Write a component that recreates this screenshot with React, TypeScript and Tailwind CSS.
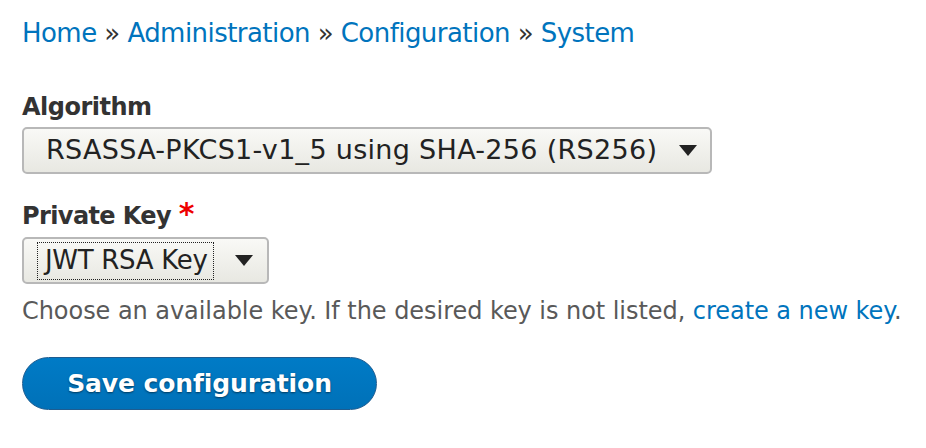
import React from "react";

const FONT = "font-['DejaVu_Sans',sans-serif]";

function Arrow() {
  return (
    <svg width="18" height="11" viewBox="0 0 18 11" className="shrink-0">
      <path d="M0 0 H18 L9 11 Z" fill="#222" />
    </svg>
  );
}

export default function App() {
  return (
    <div className={`${FONT} w-[926px] h-[448px] bg-white pl-[22px] pt-[18px] text-[#333]`}>
      {/* Breadcrumb */}
      <nav className="text-[26px] leading-[30px] text-[#0074bd] tracking-[-0.55px]">
        <a>Home</a> <span className="text-[#333]">»</span> <a>Administration</a>{" "}
        <span className="text-[#333]">»</span> <a>Configuration</a>{" "}
        <span className="text-[#333]">»</span> <a>System</a>
      </nav>

      {/* Algorithm */}
      <div className="mt-[44px]">
        <label className="block text-[24px] leading-[30px] font-bold tracking-[-0.5px]">Algorithm</label>
        <div className="mt-[5px] w-[690px] h-[47px] flex items-center justify-between pl-[22px] pr-[13px] rounded-[5px] border-2 border-[#b8b8b8] bg-gradient-to-b from-[#f9f9f6] to-[#e8e8e2] text-[27px] text-[#222] tracking-[0.3px]">
          <span>RSASSA-PKCS1-v1_5 using SHA-256 (RS256)</span>
          <Arrow />
        </div>
      </div>

      {/* Private Key */}
      <div className="mt-[25px]">
        <label className="block text-[24px] leading-[30px] font-bold tracking-[-0.6px]">
          Private Key <span className="text-[#e00] text-[30px]">*</span>
        </label>
        <div className="mt-[6px] w-[247px] h-[47px] flex items-center justify-between pl-[13px] pr-[14px] rounded-[5px] border-2 border-[#b8b8b8] bg-gradient-to-b from-[#f9f9f6] to-[#e8e8e2] text-[26px] text-[#222] tracking-[-0.3px]">
          <span className="border border-dotted border-[#222] pl-[7px] pr-[6px] h-[38px] flex items-center">JWT RSA Key</span>
          <Arrow />
        </div>
        <p className="mt-[12px] text-[24px] leading-[30px] text-[#595959] tracking-[-0.05px]">
          Choose an available key. If the desired key is not listed,{" "}
          <a className="text-[#0074bd]">create a new key</a>.
        </p>
      </div>

      {/* Submit */}
      <button className="mt-[31px] w-[355px] h-[53px] rounded-full border border-[#1e5c90] bg-gradient-to-b from-[#007bc6] to-[#0071b8] text-white text-[25px] font-bold tracking-[-0.1px] [text-shadow:0_1px_2px_rgba(0,0,0,0.5)]">
        Save configuration
      </button>
    </div>
  );
}
